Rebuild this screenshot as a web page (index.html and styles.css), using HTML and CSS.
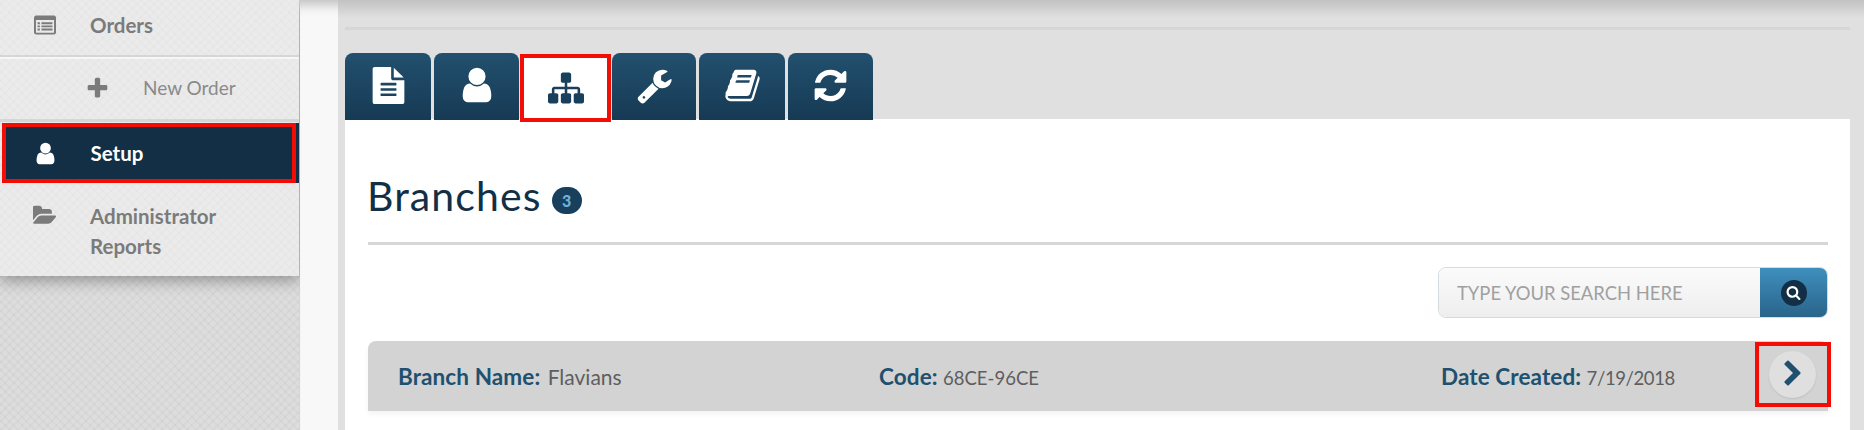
FILE: index.html
```html
<!DOCTYPE html>
<html lang="en">
<head>
  <meta charset="UTF-8" />
  <title>Branches</title>
  <link rel="stylesheet" href="styles.css">
</head>
<body>
  <aside class="sidebar">
    <nav class="side-menu">
      <a class="side-item side-orders" href="#">
        <svg class="side-icon" viewBox="0 0 1792 1792"><path fill-rule="evenodd" d="M160 128h1472q66 0 113 47t47 113v1216q0 66-47 113t-113 47H160q-66 0-113-47T0 1504V288q0-66 47-113t113-47zm0 352v1008q0 14 9 23t23 9h1408q14 0 23-9t9-23V480H160zm128 192h192v160H288V672zm320 0h896v160H608V672zM288 928h192v160H288V928zm320 0h896v160H608V928zm-320 256h192v160H288v-160zm320 0h896v160H608v-160z"/></svg>
        <span>Orders</span>
      </a>
      <a class="side-item side-sub" href="#">
        <svg class="sub-icon" viewBox="0 0 1792 1792"><path d="M1600 736v192q0 40-28 68t-68 28h-416v416q0 40-28 68t-68 28h-192q-40 0-68-28t-28-68v-416h-416q-40 0-68-28t-28-68v-192q0-40 28-68t68-28h416v-416q0-40 28-68t68-28h192q40 0 68 28t28 68v416h416q40 0 68 28t28 68z"/></svg>
        <span>New Order</span>
      </a>
      <a class="side-item side-active" href="#">
        <svg class="side-icon" viewBox="0 0 1792 1792"><path d="M1536 1399q0 109-62.5 187t-150.5 78h-854q-88 0-150.5-78t-62.5-187q0-85 8.5-160.5t31.5-152 58.5-131 94-89 134.5-34.5q131 128 313 128t313-128q76 0 134.5 34.5t94 89 58.5 131 31.5 152 8.5 160.5zm-256-887q0 159-112.5 271.5t-271.5 112.5-271.5-112.5-112.5-271.5 112.5-271.5 271.5-112.5 271.5 112.5 112.5 271.5z"/></svg>
        <span>Setup</span>
        <i class="mark mark-setup"></i>
      </a>
      <a class="side-item side-reports" href="#">
        <svg class="side-icon" viewBox="0 0 1792 1792"><path d="M1815 952q0 31-31 66l-336 396q-43 51-120.5 86.5t-143.5 35.5h-1088q-34 0-60.5-13t-26.5-43q0-31 31-66l336-396q43-51 120.5-86.5t143.5-35.5h1088q34 0 60.5 13t26.5 43zm-343-344v160h-832q-94 0-197 47.5t-164 119.5l-337 396-5 6q0-4-.5-12.5t-.5-12.5v-960q0-92 66-158t158-66h320q92 0 158 66t66 158v32h544q92 0 158 66t66 158z"/></svg>
        <span>Administrator<br>Reports</span>
      </a>
    </nav>
  </aside>

  <div class="gutter">
    <main class="content">
      <div class="top-rule"></div>

      <div class="tabs">
        <a class="tab" href="#">
          <svg viewBox="0 0 1792 1792"><path d="M1596 476q14 14 28 36h-472v-472q22 14 36 28zm-476 164h544v1056q0 40-28 68t-68 28h-1344q-40 0-68-28t-28-68v-1600q0-40 28-68t68-28h800v544q0 40 28 68t68 28zm160 736v-64q0-14-9-23t-23-9h-704q-14 0-23 9t-9 23v64q0 14 9 23t23 9h704q14 0 23-9t9-23zm0-256v-64q0-14-9-23t-23-9h-704q-14 0-23 9t-9 23v64q0 14 9 23t23 9h704q14 0 23-9t9-23zm0-256v-64q0-14-9-23t-23-9h-704q-14 0-23 9t-9 23v64q0 14 9 23t23 9h704q14 0 23-9t9-23z"/></svg>
        </a>
        <a class="tab tab-user" href="#">
          <svg viewBox="0 0 1792 1792"><path d="M1536 1399q0 109-62.5 187t-150.5 78h-854q-88 0-150.5-78t-62.5-187q0-85 8.5-160.5t31.5-152 58.5-131 94-89 134.5-34.5q131 128 313 128t313-128q76 0 134.5 34.5t94 89 58.5 131 31.5 152 8.5 160.5zm-256-887q0 159-112.5 271.5t-271.5 112.5-271.5-112.5-112.5-271.5 112.5-271.5 271.5-112.5 271.5 112.5 112.5 271.5z"/></svg>
        </a>
        <a class="tab tab-active" href="#">
          <svg viewBox="0 0 1792 1792"><path d="M1792 1248v320q0 40-28 68t-68 28h-320q-40 0-68-28t-28-68v-320q0-40 28-68t68-28h96v-192h-512v192h96q40 0 68 28t28 68v320q0 40-28 68t-68 28h-320q-40 0-68-28t-28-68v-320q0-40 28-68t68-28h96v-192h-512v192h96q40 0 68 28t28 68v320q0 40-28 68t-68 28h-320q-40 0-68-28t-28-68v-320q0-40 28-68t68-28h96v-192q0-52 38-90t90-38h512v-192h-96q-40 0-68-28t-28-68v-320q0-40 28-68t68-28h320q40 0 68 28t28 68v320q0 40-28 68t-68 28h-96v192h512q52 0 90 38t38 90v192h96q40 0 68 28t28 68z"/></svg>
        </a>
        <a class="tab" href="#">
          <svg viewBox="0 0 1792 1792"><path d="M448 1472q0-26-19-45t-45-19-45 19-19 45 19 45 45 19 45-19 19-45zm644-420l-682 682q-37 37-90 37-52 0-91-37l-106-108q-38-36-38-90 0-53 38-91l681-681q39 98 114.5 173.5t173.5 114.5zm634-435q0 39-23 106-47 134-164.5 217.5t-258.5 83.5q-185 0-316.5-131.5t-131.5-316.5 131.5-316.5 316.5-131.5q58 0 121.5 16.5t107.5 46.5q16 11 16 28t-16 28l-293 169v224l193 107q5-3 79-48.5t135.5-81 70.5-35.5q15 0 23.5 10t8.5 25z"/></svg>
        </a>
        <a class="tab" href="#">
          <svg viewBox="0 0 1792 1792"><path d="M1703 478q40 57 18 129l-275 906q-19 64-76.5 107.5t-122.5 43.5h-923q-77 0-148.5-53.5t-99.5-131.5q-24-67-2-127 0-4 3-27t4-37q1-8-3-21.5t-3-19.5q2-11 8-21t16.5-23.5 16.5-23.5q23-38 45-91.5t30-91.5q3-10 .5-30t-.5-28q3-11 17-28t17-23q21-36 42-92t25-90q1-9-2.5-32t.5-28q4-13 22-30.5t22-22.5q19-26 42.5-84.5t27.5-96.5q1-8-3-25.5t-2-26.5q2-8 9-18t18-23 17-21q8-12 16.5-30.5t15-35 16-36 19.5-32 26.5-23.5 36-11.5 47.5 5.5l-1 3q38-9 51-9h761q74 0 114 56t18 130l-274 906q-36 119-71.5 153.5t-128.5 34.5h-869q-27 0-38 15-11 16-1 43 24 70 144 70h923q29 0 56-15.5t35-41.5l300-987q7-22 5-57 38 15 59 43zm-1064 2q-4 13 2 22.5t20 9.5h608q13 0 25.5-9.5t16.5-22.5l21-64q4-13-2-22.5t-20-9.5h-608q-13 0-25.5 9.5t-16.5 22.5zm-83 256q-4 13 2 22.5t20 9.5h608q13 0 25.5-9.5t16.5-22.5l21-64q4-13-2-22.5t-20-9.5h-608q-13 0-25.5 9.5t-16.5 22.5z"/></svg>
        </a>
        <a class="tab" href="#">
          <svg viewBox="0 0 1792 1792"><path d="M1639 1056q0 5-1 7-64 268-268 434.5t-478 166.5q-146 0-282.5-55t-243.5-157l-129 129q-19 19-45 19t-45-19-19-45v-448q0-26 19-45t45-19h448q26 0 45 19t19 45-19 45l-137 137q71 66 161 102t187 36q134 0 250-65t186-179q11-17 53-117 8-23 30-23h192q13 0 22.5 9.5t9.5 22.5zm25-800v448q0 26-19 45t-45 19h-448q-26 0-45-19t-19-45 19-45l138-138q-148-137-349-137-134 0-250 65t-186 179q-11 17-53 117-8 23-30 23h-199q-13 0-22.5-9.5t-9.5-22.5v-7q65-268 270-434.5t480-166.5q146 0 284 55.5t245 156.5l130-129q19-19 45-19t45 19 19 45z"/></svg>
        </a>
      </div>

      <section class="panel">
        <div class="panel-head">
          <h1>Branches</h1>
          <span class="count">3</span>
        </div>

        <div class="search-bar">
          <div class="search">
            <input type="text" placeholder="TYPE YOUR SEARCH HERE" />
            <button class="search-btn">
              <span class="search-dot">
                <svg viewBox="0 0 1792 1792"><path d="M1216 832q0-185-131.5-316.5t-316.5-131.5-316.5 131.5-131.5 316.5 131.5 316.5 316.5 131.5 316.5-131.5 131.5-316.5zm512 832q0 52-38 90t-90 38q-54 0-90-38l-343-342q-179 124-399 124-143 0-273.5-55.5t-225-150-150-225-55.5-273.5 55.5-273.5 150-225 225-150 273.5-55.5 273.5 55.5 225 150 150 225 55.5 273.5q0 220-124 399l343 343q37 37 37 90z"/></svg>
              </span>
            </button>
          </div>
        </div>

        <div class="branch-row">
          <div class="cell cell-name"><strong>Branch Name:</strong> <span>Flavians</span></div>
          <div class="cell cell-code"><strong>Code:</strong> <span>68CE-96CE</span></div>
          <div class="cell cell-date"><strong>Date Created:</strong> <span>7/19/2018</span></div>
          <a class="open-btn" href="#">
            <svg viewBox="0 0 1792 1792"><path d="M1363 877l-742 742q-19 19-45 19t-45-19l-166-166q-19-19-19-45t19-45l531-531-531-531q-19-19-19-45t19-45l166-166q19-19 45-19t45 19l742 742q19 19 19 45t-19 45z"/></svg>
          </a>
          <i class="mark mark-open"></i>
        </div>
      </section>
    </main>
  </div>
</body>
</html>
```

FILE: styles.css
```css
html {
  overflow: hidden;
}

body {
  margin: 0;
  height: 100vh;
  display: flex;
  overflow: hidden;
  font-family: "Lato", "Noto Sans", sans-serif;
  background-color: #f8f8f8;
}

a {
  text-decoration: none;
}

/* sidebar */
.sidebar {
  width: 299px;
  flex-shrink: 0;
  border-right: 1px solid #d4d4d4;
  background-color: #dddddd;
  background-image:
    repeating-linear-gradient(45deg, rgba(0, 0, 0, 0.025) 0 2px, transparent 2px 6px),
    repeating-linear-gradient(-45deg, rgba(0, 0, 0, 0.025) 0 2px, transparent 2px 6px);
}

.side-menu {
  height: 276px;
  background-color: #ebebeb;
  background-image:
    repeating-linear-gradient(45deg, rgba(0, 0, 0, 0.012) 0 2px, transparent 2px 6px),
    repeating-linear-gradient(-45deg, rgba(0, 0, 0, 0.012) 0 2px, transparent 2px 6px);
  box-shadow: 0 5px 14px rgba(0, 0, 0, 0.32);
}

.side-item {
  display: flex;
  position: relative;
  box-sizing: border-box;
  color: #7b7b7b;
  font-size: 20.5px;
  font-weight: 700;
  line-height: 30px;
}

.side-icon {
  width: 22px;
  height: 22px;
  margin: 0 34px;
  flex-shrink: 0;
  fill: #7b7b7b;
}

.side-orders {
  height: 57px;
  align-items: center;
  padding-bottom: 5px;
  border-bottom: 2px solid #d6d6d6;
  box-shadow: 0 2px 0 #f6f6f6;
}

.side-sub {
  height: 65px;
  align-items: center;
  border-bottom: 3px solid #d6d6d6;
  font-weight: 400;
  font-size: 19px;
  color: #8a8a8a;
}

.sub-icon {
  width: 25px;
  height: 25px;
  margin-left: 85px;
  margin-right: 33px;
  fill: #7b7b7b;
}

.side-active {
  height: 60px;
  margin-top: 1px;
  margin-left: 2px;
  align-items: center;
  color: #fff;
  background-color: #122f46;
}

.side-active .side-icon {
  width: 25px;
  height: 25px;
  margin: 0 33px 0 30.5px;
  fill: #fff;
}

.side-reports {
  padding-top: 18px;
}

.side-reports .side-icon {
  width: 23px;
  height: 23px;
  margin: 3px 34px 0 33px;
}

/* red call-outs */
.mark {
  position: absolute;
  box-sizing: border-box;
  border: 4px solid #f20d05;
}

.mark-setup {
  left: 0;
  top: 0;
  width: 294px;
  height: 60px;
}

.mark-open {
  right: -3px;
  top: 1px;
  width: 76px;
  height: 65px;
}

/* main column */
.gutter {
  flex: 1;
  min-width: 0;
  display: flex;
  padding-left: 38px;
  background-color: #f8f8f8;
  box-shadow: inset 0 14px 12px -10px rgba(0, 0, 0, 0.25);
}

.content {
  flex: 1;
  min-width: 0;
  display: flex;
  flex-direction: column;
  padding: 27px 14px 0 7px;
  background-image: linear-gradient(to bottom, #c2c2c2, #e0e0e0 18px);
  background-color: #e0e0e0;
}

.top-rule {
  height: 3px;
  background-color: #d6d6d6;
}

.tabs {
  display: flex;
  gap: 3px;
  margin-top: 23px;
  height: 67px;
  position: relative;
  z-index: 1;
  align-items: flex-start;
}

.tab {
  width: 86px;
  height: 67px;
  padding-bottom: 3px;
  box-sizing: border-box;
  display: flex;
  align-items: center;
  justify-content: center;
  background: linear-gradient(to bottom, #22506e, #163a54);
  border-radius: 8px 8px 0 0;
}

.tab:nth-child(2),
.tab:nth-child(6) {
  width: 85px;
}

.tab:nth-child(4) {
  width: 84px;
}

.tab svg {
  width: 37px;
  height: 37px;
  flex-shrink: 0;
  fill: #fff;
}

.tab-user svg {
  width: 40px;
  height: 40px;
}

.tab-active {
  width: 91px;
  height: 68px;
  margin: 1px -2px 0;
  padding: 0;
  background: #fff;
  border: 4px solid #f20d05;
  border-radius: 0;
}

.tab-active svg {
  width: 36px;
  height: 36px;
  fill: #183f5b;
}

.panel {
  flex: 1;
  margin-top: -1px;
  padding: 0 22px 0 23px;
  background-color: #fff;
}

.panel-head {
  display: flex;
  align-items: center;
  gap: 10px;
  padding: 46px 0 15px;
  border-bottom: 3px solid #d6d6d6;
}

.panel-head h1 {
  margin: 0 0 0 -1px;
  color: #122f46;
  font-size: 41px;
  font-weight: 400;
  letter-spacing: 1.1px;
  line-height: 62px;
}

.count {
  width: 30px;
  height: 27px;
  margin-top: 9px;
  border-radius: 14px;
  background-color: #183f5b;
  color: #6db0dc;
  font-size: 16px;
  font-weight: 900;
  line-height: 27px;
  text-align: center;
}

.search-bar {
  display: flex;
  justify-content: flex-end;
  margin-top: 22px;
}

.search {
  display: flex;
  width: 390px;
  height: 51px;
  box-sizing: border-box;
  border: 1px solid #d3dbe0;
  border-radius: 8px;
  overflow: hidden;
}

.search input {
  flex: 1;
  min-width: 0;
  padding: 0 0 0 18px;
  border: none;
  outline: none;
  background: linear-gradient(to bottom, #fbfbfb, #eeeeee);
  font-family: inherit;
  font-size: 18.4px;
}

.search input::placeholder {
  color: #a0a0a0;
  opacity: 1;
}

.search-btn {
  width: 67px;
  padding: 0;
  border: none;
  display: flex;
  align-items: center;
  justify-content: center;
  background: linear-gradient(to bottom, #3e8fbd, #2a648a);
}

.search-dot {
  width: 26px;
  height: 26px;
  border-radius: 50%;
  display: flex;
  align-items: center;
  justify-content: center;
  background-color: #122f46;
}

.search-dot svg {
  width: 15px;
  height: 15px;
  fill: #fff;
}

.branch-row {
  display: grid;
  grid-template-columns: 481px 562px 1fr 47px;
  align-items: center;
  position: relative;
  height: 70px;
  margin-top: 23px;
  padding: 0 12px 0 30px;
  background-color: #d3d3d3;
  border-radius: 8px 8px 0 0;
  box-shadow: 0 3px 5px rgba(0, 0, 0, 0.05);
  color: #5e5e5e;
  font-size: 21px;
}

.branch-row strong {
  color: #20506f;
  font-size: 22.5px;
  letter-spacing: 0.1px;
}

.cell-name span {
  margin-left: 2px;
}

.cell-code span {
  font-size: 18.5px;
}

.cell-date span {
  font-size: 18.5px;
  letter-spacing: -0.4px;
}

.open-btn {
  width: 47px;
  height: 47px;
  margin-top: -4px;
  border-radius: 50%;
  display: flex;
  align-items: center;
  justify-content: center;
  background-color: #dfdfdf;
  box-shadow: 0 1px 2px rgba(0, 0, 0, 0.1);
}

.open-btn svg {
  width: 28px;
  height: 28px;
  fill: #20506f;
}
```
